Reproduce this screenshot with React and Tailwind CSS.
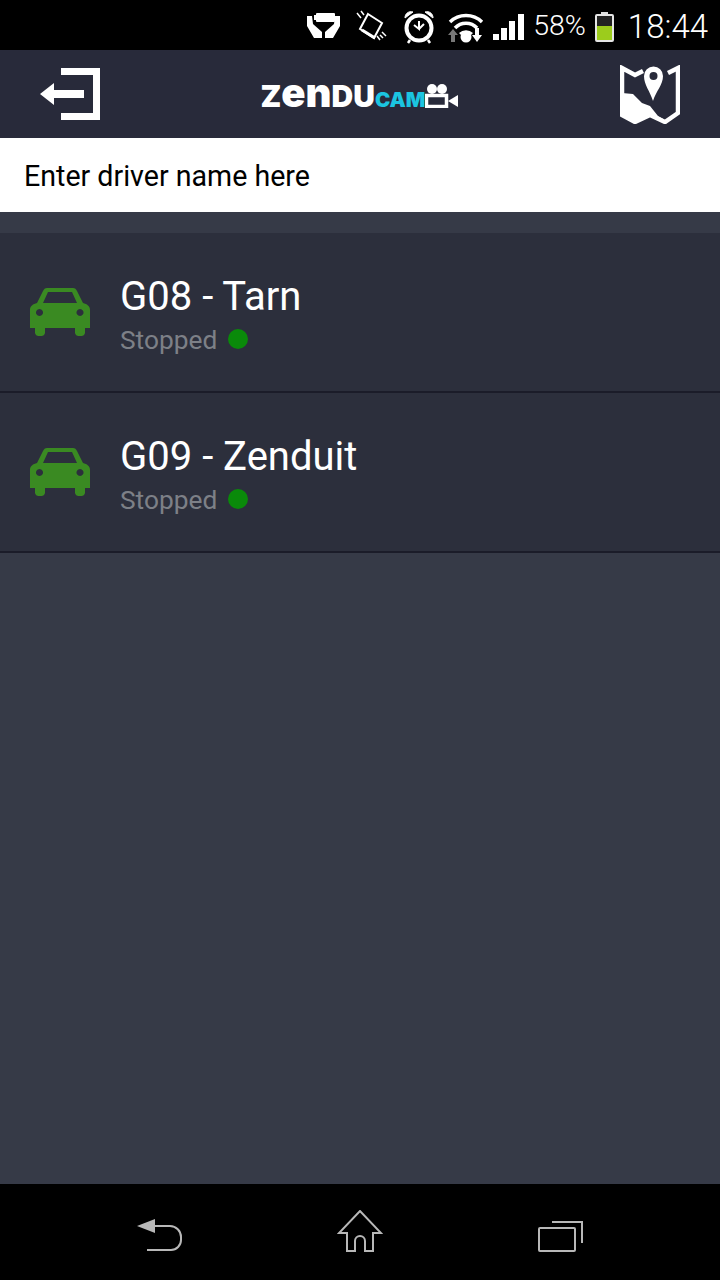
const vehicles = [
  { id: 1, name: 'G08 - Tarn', status: 'Stopped' },
  { id: 2, name: 'G09 - Zenduit', status: 'Stopped' },
];

const BatteryHands = () => (
  <svg width="35" height="30" viewBox="0 0 35 30" fill="#fff">
    <rect x="10" y="1" width="19" height="9" rx="1" />
    <rect x="8" y="3" width="2" height="5" />
    <path d="M1 4h5l1 8 9 8v6H8L1 14z" />
    <path d="M34 4h-5l-1 8-9 8v6h8l7-12z" />
  </svg>
);

const Vibrate = () => (
  <svg width="33" height="33" viewBox="0 0 33 33" fill="none" stroke="#fff">
    <path d="M13 4 27 13 19 28 5 19z" strokeWidth="2" />
    <path d="M7 20 20 28" strokeWidth="3" />
    <path d="M2 3 6 8M6 1l3 4M25 30l-3-4M31 26l-4-4M28 28l-3-3" strokeWidth="1.5" />
  </svg>
);

const Alarm = () => (
  <svg width="32" height="34" viewBox="0 0 32 34" fill="none" stroke="#fff">
    <circle cx="16" cy="18" r="12.500" strokeWidth="4" />
    <path d="M16 11v8l-5-4M16 19l5-5" strokeWidth="2" />
    <path d="M2 8a6 6 0 0 1 8-6zM30 8a6 6 0 0 0-8-6z" fill="#fff" strokeWidth="1" />
    <path d="M7 30 5 33M25 30l2 3" strokeWidth="2.500" />
  </svg>
);

const Wifi = () => (
  <svg width="37" height="32" viewBox="0 0 37 32" fill="none">
    <path d="M2 11a23 23 0 0 1 32 0" stroke="#fff" strokeWidth="3.500" />
    <path d="M7 17a15 15 0 0 1 22 0" stroke="#fff" strokeWidth="3.500" />
    <circle cx="18" cy="26" r="5.500" fill="#fff" />
    <path d="M12 23a9 9 0 0 1 12 0" stroke="#fff" strokeWidth="3" />
    <path d="M5 18l5 6H7v7H3v-7H0z" fill="#777" />
    <path d="M31 17v7h3l-5 7-5-7h3v-7z" fill="#fff" />
  </svg>
);

const Signal = () => (
  <svg width="31" height="28" viewBox="0 0 31 28" fill="#fff">
    <rect x="0" y="21" width="6" height="6" />
    <rect x="8" y="15" width="6" height="12" />
    <rect x="16" y="8" width="6" height="19" />
    <rect x="25" y="1" width="6" height="26" />
  </svg>
);

const Battery = () => (
  <svg width="19" height="30" viewBox="0 0 19 30">
    <rect x="6" y="0" width="7" height="3" fill="#ddd" />
    <rect x="1" y="3" width="17" height="26" rx="1" fill="#222" stroke="#e5e5e5" strokeWidth="2" />
    <rect x="2" y="14" width="15" height="14" fill="#9ccc1c" />
  </svg>
);

const ExitIcon = () => (
  <svg width="60" height="52" viewBox="0 0 60 52" fill="#fff">
    <path d="M21 0h39v52H21v-7h32V7H21z" />
    <path d="M0 26 14 15v7h30v8H14v7z" />
  </svg>
);

const CameraIcon = () => (
  <svg width="34" height="24" viewBox="0 0 34 24">
    <circle cx="7" cy="5" r="5" fill="#fff" />
    <circle cx="17" cy="5" r="5" fill="#fff" />
    <rect x="1.500" y="11.500" width="20" height="11" fill="none" stroke="#fff" strokeWidth="3.500" />
    <path d="M23 17 33 11v12z" fill="#fff" />
  </svg>
);

const Logo = () => (
  <div className="flex items-end font-['Inter',sans-serif] font-black leading-none">
    <div className="flex items-baseline text-white">
      <span className="text-[30px] leading-[24px]">Z</span>
      <span className="text-[40px] leading-[24px]">en</span>
      <span className="text-[30px] leading-[24px]">DU</span>
    </div>
    <span className="text-[20.5px] leading-[16px] text-[#1bc5e0]">CAM</span>
    <CameraIcon />
  </div>
);

const MapIcon = () => (
  <svg width="60" height="59" viewBox="0 0 60 59">
    <path d="M23 6 15 10 2 3V50L15 57 30 50 45 57 58 48V3L48 8" fill="none" stroke="#fff" strokeWidth="4.500" />
    <path d="M2 28 13 29 22 38 30 41 38 51 45 55 30 50 15 57 2 50z" fill="#fff" />
    <path d="M33 36C30 26 24 20 24 11a9.500 9.500 0 0 1 19 0C43 20 36 26 33 36z" fill="#fff" />
    <circle cx="33.500" cy="11" r="4" fill="#282a3a" />
  </svg>
);

const CarIcon = () => (
  <svg width="60" height="48" viewBox="0 0 60 48" fill="#3a8a22">
    <path fillRule="evenodd" d="M17 0h26c2 0 3 1 4 3l6 12c4 1 7 3 7 7v18h-5v5a4 4 0 0 1-4 3h-2a4 4 0 0 1-4-3v-5H15v5a4 4 0 0 1-4 3H9a4 4 0 0 1-4-3v-5H0V22c0-4 3-6 7-7l6-12c1-2 2-3 4-3zM18 4 13 15H47L42 4zM9.500 21a3.500 3.500 0 1 0 .01 0zM50 21a3.500 3.500 0 1 0 .01 0z" />
  </svg>
);

const BackNav = () => (
  <svg width="46" height="34" viewBox="0 0 46 34" fill="none" stroke="#b8b8b8" strokeWidth="2">
    <path d="M0 8 18 1v14z" fill="#b8b8b8" stroke="none" />
    <path d="M16 8h17a11 11 0 0 1 11 11v3a10 10 0 0 1-10 10H10" />
  </svg>
);

const HomeNav = () => (
  <svg width="46" height="42" viewBox="0 0 46 42" fill="none" stroke="#b8b8b8" strokeWidth="2">
    <path d="M10 23v18h8V31a5 5 0 0 1 10 0v10h8V23h8L23 1 2 23z" />
  </svg>
);

const RecentsNav = () => (
  <svg width="45" height="31" viewBox="0 0 45 31" fill="none" stroke="#b8b8b8" strokeWidth="2">
    <rect x="1" y="7" width="36" height="23" rx="1" />
    <path d="M14 1h30v21" />
  </svg>
);

const VehicleRow = ({ vehicle }) => (
  <div className="flex h-[160px] items-center border-b-2 border-[#1b1c29] bg-[#2c2f3c] pl-[30px]">
    <CarIcon />
    <div className="ml-[30px] pt-[6px]">
      <div className="text-[40px] leading-[46px] text-white">{vehicle.name}</div>
      <div className="mt-[4px] flex items-center text-[26.3px] leading-[32px] text-[#7d8087]">
        {vehicle.status}
        <span className="ml-[11px] -mt-[2px] h-[20px] w-[20px] rounded-full bg-[#0a8a0a]" />
      </div>
    </div>
  </div>
);

export default function App() {
  return (
    <div className="flex min-h-[1280px] flex-col bg-[#363a47] font-['Roboto',sans-serif]">
      <div className="flex h-[50px] items-center justify-end bg-black pr-[12px] pt-[3px] text-white">
        <div className="flex items-center">
          <BatteryHands />
          <div className="ml-[14px]"><Vibrate /></div>
          <div className="ml-[15px]"><Alarm /></div>
          <div className="ml-[13px]"><Wifi /></div>
          <div className="ml-[8px]"><Signal /></div>
          <span className="ml-[9px] text-[28.5px] font-light">58%</span>
          <div className="ml-[9px]"><Battery /></div>
          <span className="ml-[14px] text-[33px] font-light">18:44</span>
        </div>
      </div>

      <div className="flex h-[88px] items-center justify-between bg-[#282a3a] px-[40px]">
        <ExitIcon />
        <Logo />
        <MapIcon />
      </div>

      <div className="flex h-[74px] items-center bg-white pl-[24px] pt-[2px] text-[28.6px] text-black">
        Enter driver name here
      </div>

      <div className="flex-1 pt-[21px]">
        {vehicles.map((vehicle) => (
          <VehicleRow key={vehicle.id} vehicle={vehicle} />
        ))}
      </div>

      <div className="grid h-[96px] grid-cols-3 items-end justify-items-center bg-black px-[60px] pb-[28px]">
        <BackNav />
        <HomeNav />
        <RecentsNav />
      </div>
    </div>
  );
}
